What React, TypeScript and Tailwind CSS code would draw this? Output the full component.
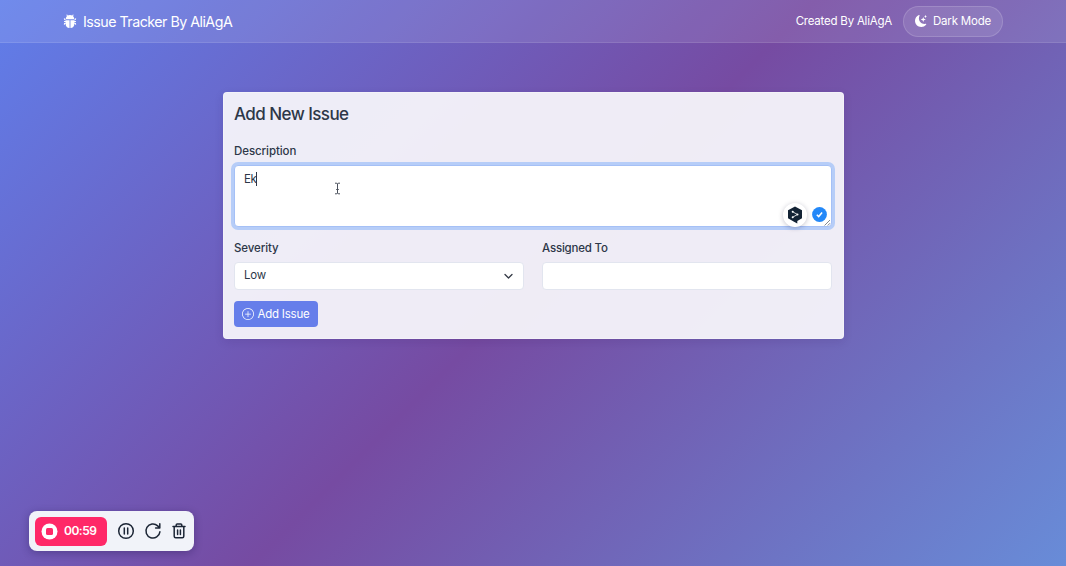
import { BsBugFill, BsMoonStarsFill, BsPlusCircle } from "react-icons/bs";

function Header() {
  return (
    <header className="flex h-[43px] items-center justify-between border-b border-white/10 bg-white/10 pl-[63px] pr-[63px] text-white">
      <div className="flex items-center gap-[6px]">
        <BsBugFill className="size-[14px]" />
        <span className="mt-px text-[14.25px] leading-5 tracking-[-0.52px]">Issue Tracker By AliAgA</span>
      </div>
      <div className="flex items-center gap-[11px]">
        <span className="mt-px text-[11.5px] tracking-[-0.22px]">Created By AliAgA</span>
        <button className="flex h-[31px] w-[100px] items-center justify-center gap-[6px] rounded-full border border-white/15 bg-white/10 text-[11.5px] tracking-[-0.2px]">
          <BsMoonStarsFill className="size-3" />
          <span className="mt-px">Dark Mode</span>
        </button>
      </div>
    </header>
  );
}

function IssueForm() {
  return (
    <main className="ml-[222.5px] mt-[48.5px] h-[247.5px] w-[621px] rounded-[4px] border border-white/30 bg-[#f6f4fa]/95 px-[10.5px] pt-[10.5px] text-[#2d3748] shadow-[0_3px_10px_rgba(40,20,80,0.12)]">
      <h1 className="h-[22px] text-[17px] leading-[22px] font-medium tracking-[-0.56px]">Add New Issue</h1>
      <label className="mt-[18px] block h-4 text-[11.5px] leading-4 font-medium tracking-[-0.08px]">Description</label>
      <div className="relative mt-[6px] h-[62px] w-[598px] rounded-[4px] border border-[#a5c0f6] bg-white ring-[3px] ring-[#b6cdf8]">
        <div className="flex h-full items-start pl-[9px] pt-[5px]">
          <span className="text-[11.5px] leading-4 tracking-[-0.4px]">Ek</span>
          <span className="mt-px h-[14px] w-px bg-[#2d3748]" />
        </div>
        <svg className="absolute left-[98px] top-[16px]" width="9" height="13" viewBox="0 0 9 13" fill="none" stroke="#4b515c" strokeWidth="1">
          <path d="M2 1.2h1.3q1 0 1.2.8q.2-.8 1.2-.8H7M4.5 2v9M2 11.8h1.3q1 0 1.2-.8q.2.8 1.2.8H7M3.2 7.5h2.6" />
        </svg>
        <div className="absolute left-[548px] top-[37px] flex size-6 items-center justify-center rounded-full bg-white shadow-[0_1px_5px_rgba(20,20,60,0.25)]">
          <svg width="16" height="18" viewBox="0 0 16 18">
            <path d="M8 0.5L15 4.3V12.3L10.3 15V17.5L7 15.8L1 12.3V4.3Z" fill="#132335" />
            <path d="M5.7 5.8L10.5 8.5L5.7 11.2" fill="none" stroke="white" strokeWidth="0.8" />
            <circle cx="5.7" cy="5.8" r="1" fill="white" />
            <circle cx="10.5" cy="8.5" r="1" fill="white" />
            <circle cx="5.7" cy="11.2" r="1" fill="white" />
          </svg>
        </div>
        <svg className="absolute left-[577px] top-[41px]" width="15" height="15" viewBox="0 0 15 15">
          <circle cx="7.5" cy="7.5" r="7.4" fill="#2388f8" />
          <path d="M4.8 7.7L6.7 9.6L10.1 5.5" fill="none" stroke="white" strokeWidth="1.5" />
        </svg>
        <svg className="absolute bottom-0 right-0" width="7" height="7" viewBox="0 0 7 7" stroke="#666a73" strokeWidth="0.8">
          <path d="M0.5 6.5L6 1M3.7 6.5L6 4.2" />
        </svg>
      </div>
      <div className="mt-[13px] grid w-[598px] grid-cols-2 gap-[18px]">
        <div>
          <label className="block h-4 text-[11.5px] leading-4 font-medium tracking-[-0.1px]">Severity</label>
          <div className="mt-[6px] flex h-7 items-center justify-between rounded-[4px] border border-[#e2e5ef] bg-white pl-[9px] pr-[10px] text-[11.5px] tracking-[-0.2px]">
            <span>Low</span>
            <svg width="9" height="7" viewBox="0 0 9 7" fill="none" stroke="#343a46" strokeWidth="1.3" strokeLinecap="round" strokeLinejoin="round">
              <path d="M1 1.5L4.5 5L8 1.5" />
            </svg>
          </div>
        </div>
        <div>
          <label className="block h-4 text-[11.5px] leading-4 font-medium tracking-[-0.2px]">Assigned To</label>
          <div className="mt-[6px] h-7 rounded-[4px] border border-[#e2e5ef] bg-white" />
        </div>
      </div>
      <button className="mt-[11px] flex h-[26px] w-[84px] items-center justify-center gap-[3px] rounded-[4px] bg-[#667eea] text-[11.5px] tracking-[-0.2px] text-white">
        <BsPlusCircle className="size-3" />
        <span className="mt-px">Add Issue</span>
      </button>
    </main>
  );
}

function Recorder() {
  return (
    <div className="ml-[29px] flex h-10 w-[165px] items-center rounded-[8px] bg-[#f1f3f9] pl-[6px] text-[#1c2636] shadow-[0_2px_8px_rgba(20,10,60,0.3)]">
      <div className="flex h-[29px] w-[72px] items-center gap-[6px] rounded-[6px] bg-[#ff2868] pl-[6px] text-white">
        <svg width="17" height="17" viewBox="0 0 17 17">
          <circle cx="8.5" cy="8.5" r="8" fill="white" />
          <rect x="5" y="5" width="7" height="7" rx="1.5" fill="#ff2868" />
        </svg>
        <span className="text-[12px] font-semibold tracking-[-0.5px]">00:59</span>
      </div>
      <svg className="ml-[10px]" width="18" height="18" viewBox="0 0 18 18" fill="none" stroke="currentColor" strokeWidth="1.5" strokeLinecap="round">
        <circle cx="9" cy="9" r="7.3" />
        <path d="M7.3 6v6M10.7 6v6" />
      </svg>
      <svg className="ml-[9px]" width="18" height="18" viewBox="0 0 18 18" fill="none" stroke="currentColor" strokeWidth="1.5" strokeLinecap="round" strokeLinejoin="round">
        <path d="M15.9 9.8A7 7 0 1 1 13.7 3.9L15.8 6M15.8 1.8V6h-4.2" />
      </svg>
      <svg className="ml-[9px]" width="16" height="18" viewBox="0 0 16 18" fill="none" stroke="currentColor" strokeWidth="1.5" strokeLinecap="round" strokeLinejoin="round">
        <path d="M2 4.5h12M5.2 4.5V3q0-1 1-1h3.6q1 0 1 1v1.5M3.2 4.5v9.7q0 1.5 1.5 1.5h6.6q1.5 0 1.5-1.5V4.5M6.6 8v4.5M9.4 8v4.5" />
      </svg>
    </div>
  );
}

export default function App() {
  return (
    <div className="flex h-[566px] w-[1066px] flex-col overflow-hidden bg-[linear-gradient(135deg,#607eea_0%,#764ba2_50%,#688cd8_100%)] font-['Inter',sans-serif]">
      <Header />
      <IssueForm />
      <div className="mt-auto pb-[15px]">
        <Recorder />
      </div>
    </div>
  );
}
